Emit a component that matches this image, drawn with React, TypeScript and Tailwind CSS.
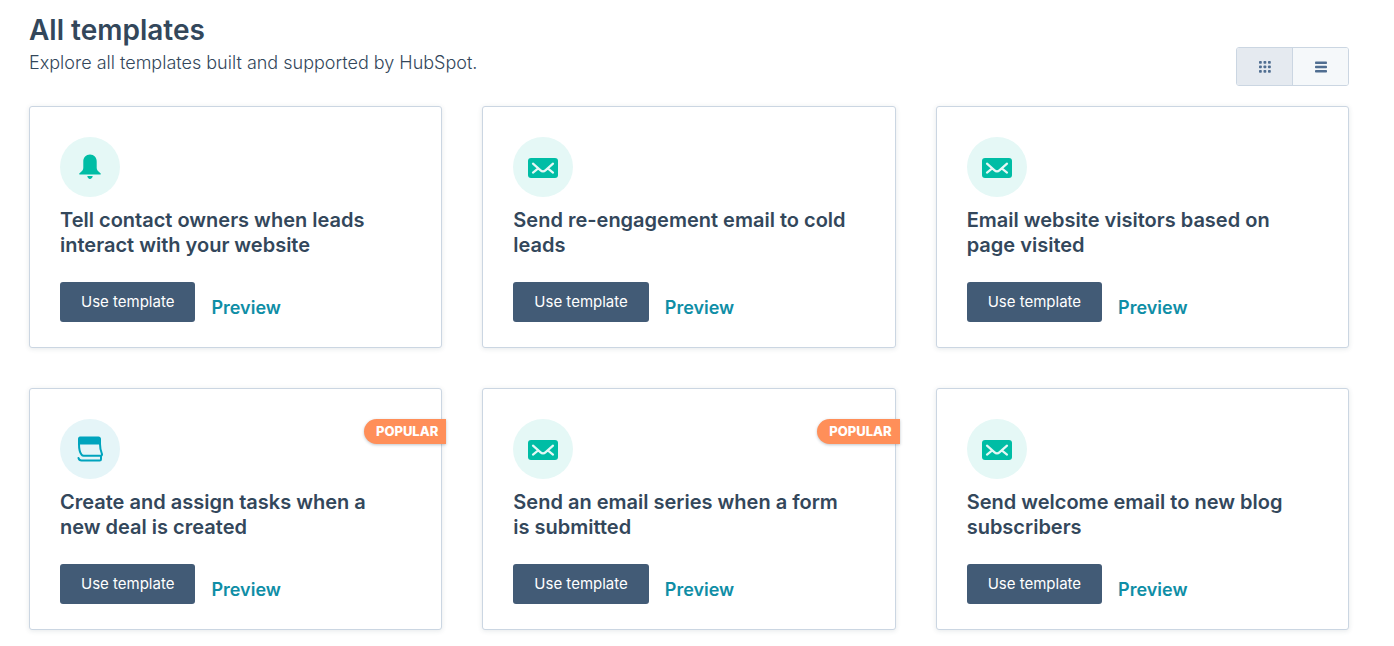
import { useState } from 'react'
import clsx from 'clsx'

type IconName = 'bell' | 'email' | 'task'

interface Template {
  title: string
  icon: IconName
  popular?: boolean
}

const TEMPLATES: Template[] = [
  { title: 'Tell contact owners when leads interact with your website', icon: 'bell' },
  { title: 'Send re-engagement email to cold leads', icon: 'email' },
  { title: 'Email website visitors based on page visited', icon: 'email' },
  { title: 'Create and assign tasks when a new deal is created', icon: 'task', popular: true },
  { title: 'Send an email series when a form is submitted', icon: 'email', popular: true },
  { title: 'Send welcome email to new blog subscribers', icon: 'email' },
]

function BellIcon() {
  return (
    <svg viewBox="0 0 24 26" className="h-[26px] w-6 fill-[#00bda5]" aria-hidden="true">
      <path d="M12 .5c-4 0-6.700 3-6.700 6.900v6.200c0 2.300-.8 3.600-2.900 4.800-.9.500-1.200 1-1.200 1.500s.4.700 1 .7h19.600c.6 0 1-.2 1-.7s-.3-1-1.200-1.500c-2.100-1.200-2.900-2.500-2.900-4.800V7.400c0-3.900-2.700-6.900-6.700-6.900z" />
      <path d="M9.300 22h5.400c-.2 1.700-1.300 2.900-2.700 2.900s-2.500-1.200-2.700-2.900z" />
    </svg>
  )
}

function EmailIcon() {
  return (
    <svg viewBox="0 0 30 20" className="mt-0.5 h-5 w-[30px]" fill="none" aria-hidden="true">
      <rect width="30" height="20" rx="3" fill="#00bda5" />
      <path
        d="M5 5.700l7.300 6.400c1.600 1.400 3.800 1.400 5.400 0L25 5.700M5 14.600l4-3.200M25 14.600l-4-3.200"
        stroke="#e5f8f6"
        strokeWidth="2.200"
        strokeLinecap="round"
      />
    </svg>
  )
}

function TaskIcon() {
  return (
    <svg viewBox="0 0 26 26" className="h-[26px] w-[26px]" fill="none" aria-hidden="true">
      <path d="M3 .5h18.500c1.400 0 2.500 1 2.500 2.500v5.500H1V3C1 1.500 1.800.5 3 .5z" fill="#00a4bd" />
      <path
        d="M2 8c0 5.500.7 8.500 2.500 10.700.6.800 1.300 1.100 2.200 1.100h16.600c1.300 0 2-.8 1.600-2C23.500 14.500 23 12 23 8M1.500 22c.4 1.600 1.400 2.500 3 2.500h18.200c.8 0 1.300-.5 1.300-1.300v-3"
        stroke="#00a4bd"
        strokeWidth="2"
        strokeLinecap="round"
        strokeLinejoin="round"
      />
    </svg>
  )
}

const ICONS = {
  bell: BellIcon,
  email: EmailIcon,
  task: TaskIcon,
}

function TemplateCard({ title, icon, popular }: Template) {
  const Icon = ICONS[icon]

  return (
    <li className="relative flex flex-col rounded-[3px] border border-[#cbd6e2] bg-white px-[30px] pt-[30px] pb-[25px] shadow-[0_1px_5px_rgba(45,62,80,0.12)]">
      {popular && (
        <span className="absolute top-[30px] -right-[5px] flex h-[25px] items-center rounded-l-full rounded-r-[3px] bg-[#ff8f59] pr-2 pl-3 text-[13px] font-extrabold text-white shadow-[0_1px_3px_rgba(45,62,80,0.3)]">
          POPULAR
        </span>
      )}

      <div
        className={clsx(
          'flex h-[60px] w-[60px] items-center justify-center rounded-full',
          icon === 'task' ? 'bg-[#e5f5f8]' : 'bg-[#e5f8f6]'
        )}
      >
        <Icon />
      </div>

      <h2 className="mt-[11px] pr-2.5 text-xl leading-[25px] font-semibold">{title}</h2>

      <div className="mt-auto flex items-end gap-4 pt-6">
        <button
          type="button"
          className="h-10 cursor-pointer rounded-[3px] bg-[#425b76] px-[21px] text-[15px] whitespace-nowrap text-white"
        >
          Use template
        </button>
        <a href="#preview" className="text-lg leading-7 font-semibold text-[#0f8ea6]">
          Preview
        </a>
      </div>
    </li>
  )
}

function GridIcon() {
  const dots = [0, 4.5, 9]
  return (
    <svg viewBox="0 0 12 12" className="h-3 w-3 fill-[#506e91]" aria-hidden="true">
      {dots.map((y) => dots.map((x) => <rect key={`${x}-${y}`} x={x} y={y} width="2.800" height="2.800" rx="0.800" />))}
    </svg>
  )
}

function ListIcon() {
  return (
    <svg viewBox="0 0 12 12" className="h-3 w-3 fill-[#506e91]" aria-hidden="true">
      <rect y="0.500" width="12" height="2.600" rx="0.800" />
      <rect y="4.700" width="12" height="2.600" rx="0.800" />
      <rect y="8.900" width="12" height="2.600" rx="0.800" />
    </svg>
  )
}

export default function App() {
  const [view, setView] = useState<'grid' | 'list'>('grid')

  return (
    <main className="min-h-screen bg-white pt-3 pr-[45px] pb-4 pl-[29px] font-[Inter,'Liberation_Sans',sans-serif] text-[#33475b]">
      <header className="flex items-end justify-between">
        <div className="pb-2">
          <h1 className="text-[28px] leading-9 font-semibold">All templates</h1>
          <p className="text-lg leading-[30px] font-light">Explore all templates built and supported by HubSpot.</p>
        </div>

        <div role="group" aria-label="View" className="flex h-[39px] w-[113px] overflow-hidden rounded-[3px] border border-[#cbd6e2]">
          <button
            type="button"
            aria-label="Grid view"
            aria-pressed={view === 'grid'}
            onClick={() => setView('grid')}
            className={clsx(
              'flex flex-1 cursor-pointer items-center justify-center border-r border-[#cbd6e2]',
              view === 'grid' ? 'bg-[#e5eaf0]' : 'bg-[#f5f8fa]'
            )}
          >
            <GridIcon />
          </button>
          <button
            type="button"
            aria-label="List view"
            aria-pressed={view === 'list'}
            onClick={() => setView('list')}
            className={clsx(
              'flex flex-1 cursor-pointer items-center justify-center',
              view === 'list' ? 'bg-[#e5eaf0]' : 'bg-[#f5f8fa]'
            )}
          >
            <ListIcon />
          </button>
        </div>
      </header>

      <ul className={clsx('mt-5 grid gap-10', view === 'grid' ? 'grid-cols-3' : 'grid-cols-1')}>
        {TEMPLATES.map((template) => (
          <TemplateCard key={template.title} {...template} />
        ))}
      </ul>
    </main>
  )
}
